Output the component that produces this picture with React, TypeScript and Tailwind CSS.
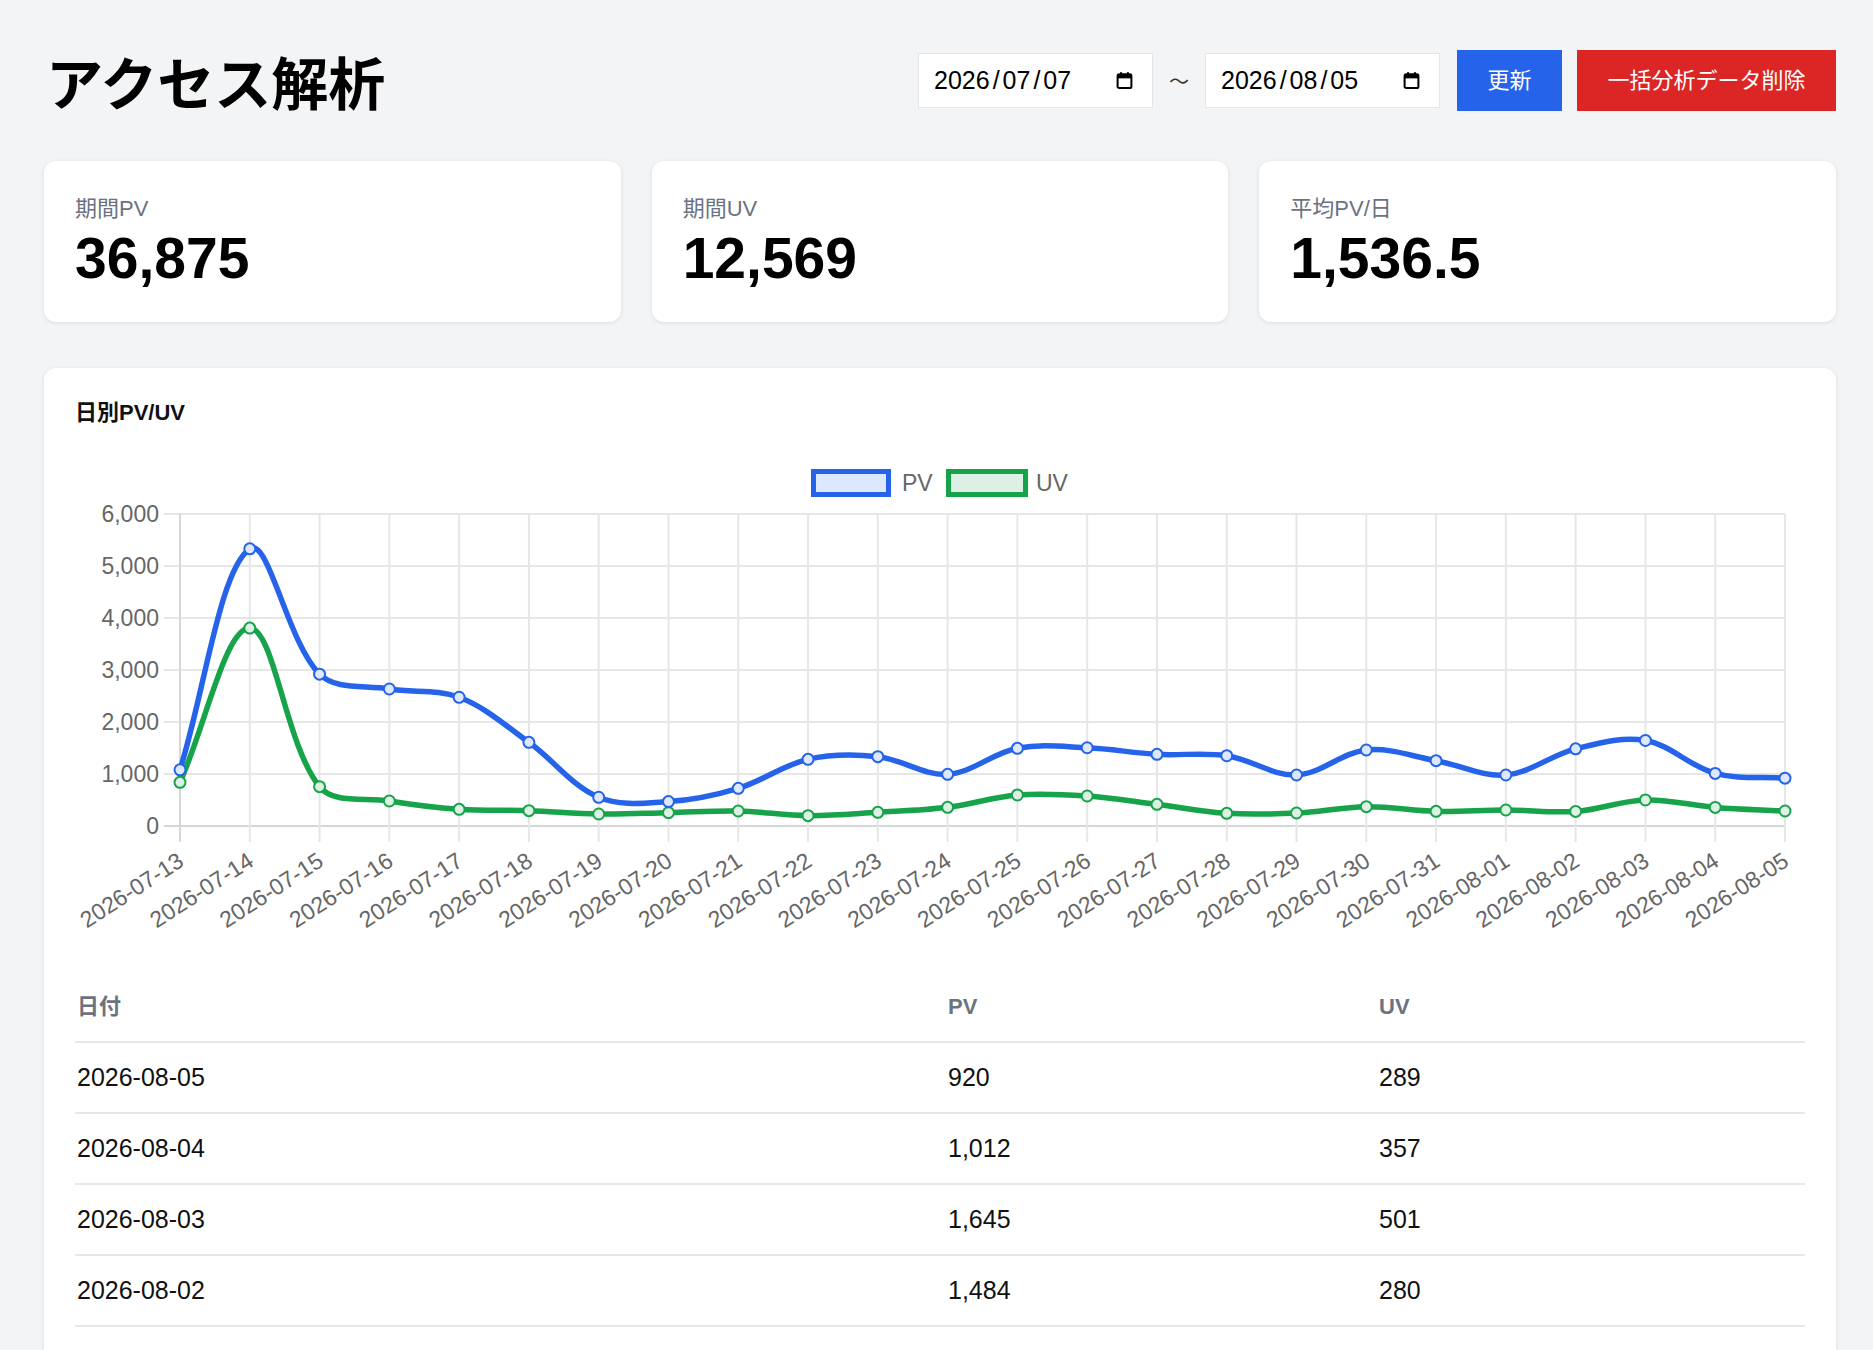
import React from "react";

const DATES = [
  "2026-07-13", "2026-07-14", "2026-07-15", "2026-07-16", "2026-07-17", "2026-07-18",
  "2026-07-19", "2026-07-20", "2026-07-21", "2026-07-22", "2026-07-23", "2026-07-24",
  "2026-07-25", "2026-07-26", "2026-07-27", "2026-07-28", "2026-07-29", "2026-07-30",
  "2026-07-31", "2026-08-01", "2026-08-02", "2026-08-03", "2026-08-04", "2026-08-05",
];
const PV = [1081, 5330, 2920, 2635, 2475, 1609, 552, 470, 724, 1282, 1333, 994, 1494, 1505, 1378, 1352, 981, 1462, 1256, 981, 1484, 1645, 1012, 920];
const UV = [840, 3806, 756, 481, 321, 295, 231, 256, 288, 199, 263, 359, 597, 577, 417, 244, 250, 372, 282, 308, 280, 501, 357, 289];

const FONT = "'Liberation Sans', 'Noto Sans CJK JP', sans-serif";

// chart geometry (svg coords)
const X0 = 105;
const X1 = 1710;
const STEP = (X1 - X0) / (DATES.length - 1);
const Y_BOTTOM = 386;
const PER_K = 52;
const xOf = (i: number) => X0 + i * STEP;
const yOf = (v: number) => Y_BOTTOM - (v / 1000) * PER_K;

type Pt = { x: number; y: number };

// same spline as chart.js with tension
function curvePath(values: number[], tension = 0.35) {
  const pts: Pt[] = values.map((v, i) => ({ x: xOf(i), y: yOf(v) }));
  const cps = pts.map((cur, i) => {
    const prev = pts[Math.max(i - 1, 0)];
    const next = pts[Math.min(i + 1, pts.length - 1)];
    const d01 = Math.hypot(cur.x - prev.x, cur.y - prev.y);
    const d12 = Math.hypot(next.x - cur.x, next.y - cur.y);
    let s01 = d01 / (d01 + d12);
    let s12 = d12 / (d01 + d12);
    if (isNaN(s01)) s01 = 0;
    if (isNaN(s12)) s12 = 0;
    const fa = tension * s01;
    const fb = tension * s12;
    return {
      prev: { x: cur.x - fa * (next.x - prev.x), y: cur.y - fa * (next.y - prev.y) },
      next: { x: cur.x + fb * (next.x - prev.x), y: cur.y + fb * (next.y - prev.y) },
    };
  });
  let d = `M ${pts[0].x} ${pts[0].y}`;
  for (let i = 1; i < pts.length; i++) {
    const a = cps[i - 1].next;
    const b = cps[i].prev;
    d += ` C ${a.x} ${a.y} ${b.x} ${b.y} ${pts[i].x} ${pts[i].y}`;
  }
  return d;
}

function Series({ values, color, fill }: { values: number[]; color: string; fill: string }) {
  return (
    <g>
      <path d={curvePath(values)} fill="none" stroke={color} strokeWidth={5.5} />
      {values.map((v, i) => (
        <circle key={i} cx={xOf(i)} cy={yOf(v)} r={5.5} fill={fill} stroke={color} strokeWidth={2} />
      ))}
    </g>
  );
}

function Chart() {
  return (
    <svg className="mt-[13px] block" width={1730} height={510} fontFamily={FONT}>
      {/* legend */}
      <rect x={738.5} y={31.5} width={75} height={23} fill="#dee8fc" stroke="#2563eb" strokeWidth={5} />
      <text x={827} y={43} fontSize={23} fill="#666" dominantBaseline="central">PV</text>
      <rect x={873.5} y={31.5} width={77} height={23} fill="#dcf1e4" stroke="#16a34a" strokeWidth={5} />
      <text x={961} y={43} fontSize={23} fill="#666" dominantBaseline="central">UV</text>

      {/* grid */}
      {[0, 1, 2, 3, 4, 5, 6].map((k) => (
        <g key={k}>
          <line x1={89} x2={X1} y1={Y_BOTTOM - k * PER_K} y2={Y_BOTTOM - k * PER_K} stroke={k === 0 ? "#d6d6d6" : "#e6e6e6"} strokeWidth={2} />
          <text x={84} y={Y_BOTTOM - k * PER_K} fontSize={23} fill="#666" textAnchor="end" dominantBaseline="central">
            {k === 0 ? "0" : `${k},000`}
          </text>
        </g>
      ))}
      {DATES.map((d, i) => (
        <g key={d}>
          <line x1={xOf(i)} x2={xOf(i)} y1={74} y2={402} stroke={i === 0 ? "#d6d6d6" : "#e6e6e6"} strokeWidth={2} />
          <text
            x={xOf(i) + 1}
            y={418}
            fontSize={23}
            fill="#666"
            textAnchor="end"
            dominantBaseline="central"
            transform={`rotate(-33 ${xOf(i) + 1} 418)`}
          >
            {d}
          </text>
        </g>
      ))}

      <Series values={UV} color="#16a34a" fill="#dcf1e4" />
      <Series values={PV} color="#2563eb" fill="#dee8fc" />
    </svg>
  );
}

function CalendarIcon() {
  return (
    <svg width="19" height="19" viewBox="0 0 16 16">
      <rect x="2.2" y="2.8" width="11.6" height="11.6" rx="1.3" fill="none" stroke="#000" strokeWidth="1.7" />
      <rect x="2.2" y="2.8" width="11.6" height="3.4" fill="#000" />
      <rect x="4.3" y="1" width="1.7" height="2.8" fill="#000" />
      <rect x="10" y="1" width="1.7" height="2.8" fill="#000" />
    </svg>
  );
}

function DateBox({ y, m, d }: { y: string; m: string; d: string }) {
  return (
    <div className="flex h-[55px] w-[235px] items-center justify-between border-[1.5px] border-[#e3e5e9] bg-white pl-[15px] pr-[18px]">
      <span className="text-[25px] leading-none text-black">
        {y}
        <span className="mx-[3px]">/</span>
        {m}
        <span className="mx-[3px]">/</span>
        {d}
      </span>
      <CalendarIcon />
    </div>
  );
}

function StatCard({ label, value }: { label: string; value: string }) {
  return (
    <div className="h-[161px] rounded-xl bg-white pl-[31px] pt-[31px] shadow-[0_1px_4px_rgba(0,0,0,0.1)]">
      <div className="text-[22px] leading-[33px] text-[#6b7280]">{label}</div>
      <div className="text-[57px] font-bold leading-[67px] text-black">{value}</div>
    </div>
  );
}

export default function App() {
  const rows = DATES.map((d, i) => ({ d, pv: PV[i], uv: UV[i] })).reverse();

  return (
    <div className="min-h-screen bg-[#f3f4f6] pb-10 pl-[44px] pr-[37px] pt-[50px] font-['Liberation_Sans','Noto_Sans_CJK_JP',sans-serif]">
      <header className="flex items-center justify-between">
        <h1 className="pl-[2px] font-['Noto_Sans_CJK_JP',sans-serif] text-[57px] font-bold leading-[61px] text-black">アクセス解析</h1>
        <div className="flex items-center">
          <DateBox y="2026" m="07" d="07" />
          <span className="mx-[17px] flex w-[18px] justify-center font-['Noto_Sans_CJK_JP',sans-serif] text-[20px] text-[#333]">〜</span>
          <DateBox y="2026" m="08" d="05" />
          <button className="ml-[17px] h-[61px] w-[105px] bg-[#2563eb] text-[22px] text-white">更新</button>
          <button className="ml-[15px] h-[61px] w-[259px] bg-[#dc2626] text-[22px] text-white">一括分析データ削除</button>
        </div>
      </header>

      <div className="mt-[50px] grid grid-cols-3 gap-[31px]">
        <StatCard label="期間PV" value="36,875" />
        <StatCard label="期間UV" value="12,569" />
        <StatCard label="平均PV/日" value="1,536.5" />
      </div>

      <section className="mt-[46px] rounded-xl bg-white px-[31px] pb-8 pt-[31px] shadow-[0_1px_4px_rgba(0,0,0,0.1)]">
        <h2 className="text-[22px] font-bold leading-[28px] text-[#111]">日別PV/UV</h2>
        <Chart />

        <div className="mt-[21px]">
          <div className="grid h-[72px] grid-cols-[871px_431px_1fr] items-center border-b-2 border-[#e5e7eb] pl-[2px] text-[22px] font-bold text-[#6b7280]">
            <div>日付</div>
            <div>PV</div>
            <div>UV</div>
          </div>
          {rows.map((r) => (
            <div
              key={r.d}
              className="grid h-[71px] grid-cols-[871px_431px_1fr] items-center border-b-2 border-[#e5e7eb] pl-[2px] text-[25px] text-[#111]"
            >
              <div>{r.d}</div>
              <div>{r.pv.toLocaleString("en-US")}</div>
              <div>{r.uv.toLocaleString("en-US")}</div>
            </div>
          ))}
        </div>
      </section>
    </div>
  );
}
